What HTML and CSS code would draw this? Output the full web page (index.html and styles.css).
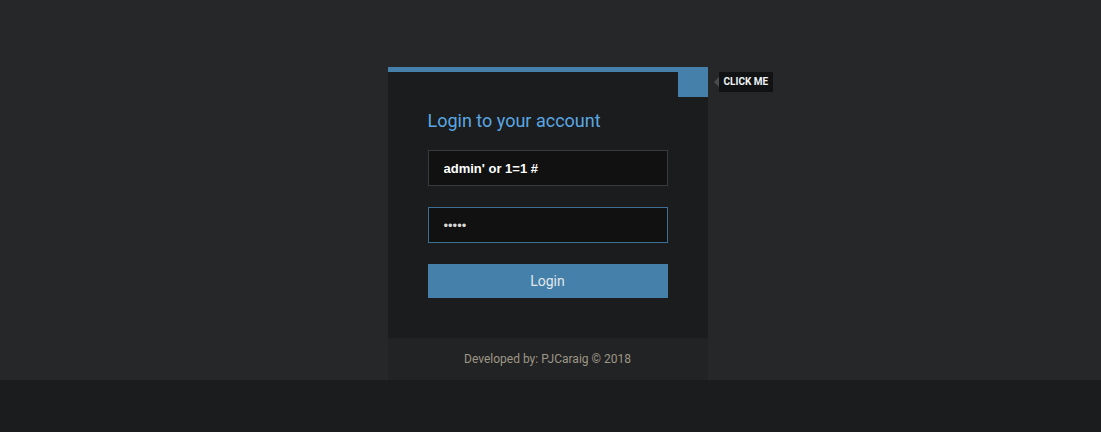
FILE: index.html
```html
<!DOCTYPE html>
<html lang="en">

<head>
    <meta charset="UTF-8">
    <meta name="viewport" content="width=device-width, initial-scale=1.0">
    <title>Login</title>

    <link rel="stylesheet" href="styles.css">
</head>

<body>

    <div class="page">
        <div class="module">
            <div class="toggle">
                <div class="tooltip">Click Me</div>
            </div>

            <div class="form">
                <h2 class="title">Login to your account</h2>
                <input type="text" class="field" value="admin' or 1=1 #">
                <input type="password" class="field field-focus" value="admin">
                <button class="btn">Login</button>
            </div>

            <div class="cta">Developed by: PJCaraig &copy; 2018</div>
        </div>
    </div>

    <div class="bottom"></div>

</body>

</html>
```

FILE: styles.css
```css
body {
    margin: 0;
    background-color: #1b1c1e;
    font-family: Roboto, "Liberation Sans", sans-serif;
}

.page {
    height: 380px;
    background-color: #262729;
    display: flex;
    justify-content: center;
    align-items: flex-start;
}

.bottom {
    height: 52px;
}

.module {
    position: relative;
    width: 320px;
    margin-top: 67px;
    margin-right: 6px;
    background-color: #1b1c1e;
    border-top: 5px solid #4480a9;
}

.toggle {
    position: absolute;
    top: -5px;
    right: 0;
    width: 30px;
    height: 30px;
    background-color: #4480a9;
}

.tooltip {
    position: absolute;
    top: 5px;
    left: 41px;
    height: 20px;
    line-height: 20px;
    padding: 0 5px;
    background-color: #111213;
    color: #eef2f6;
    font-size: 10px;
    font-weight: bold;
    text-transform: uppercase;
    white-space: nowrap;
}

.tooltip::before {
    content: "";
    position: absolute;
    left: -5px;
    top: 5px;
    border-top: 5px solid transparent;
    border-bottom: 5px solid transparent;
    border-right: 5px solid #4a4b4d;
}

.form {
    padding: 38px 40px 40px 40px;
    display: flex;
    flex-direction: column;
}

.title {
    margin: 0 0 19px 0;
    font-size: 18px;
    line-height: 21px;
    font-weight: normal;
    color: #5aa7e2;
}

.field {
    box-sizing: border-box;
    width: 240px;
    height: 36px;
    margin: 0 0 21px 0;
    padding: 0 15px;
    background-color: #111111;
    border: 1px solid #3a3b3d;
    outline: none;
    color: #ffffff;
    font-family: "Liberation Sans", Arial, sans-serif;
    font-size: 13px;
    font-weight: bold;
}

.field-focus {
    border-color: #3f6f92;
    font-weight: normal;
    color: #d8d8d8;
}

.btn {
    width: 240px;
    height: 34px;
    border: 0;
    background-color: #4480a9;
    color: #e2e7eb;
    font-family: Roboto, sans-serif;
    font-size: 14px;
}

.cta {
    height: 42px;
    line-height: 42px;
    background-color: #222325;
    text-align: center;
    color: #9e9786;
    font-size: 12px;
}
```
